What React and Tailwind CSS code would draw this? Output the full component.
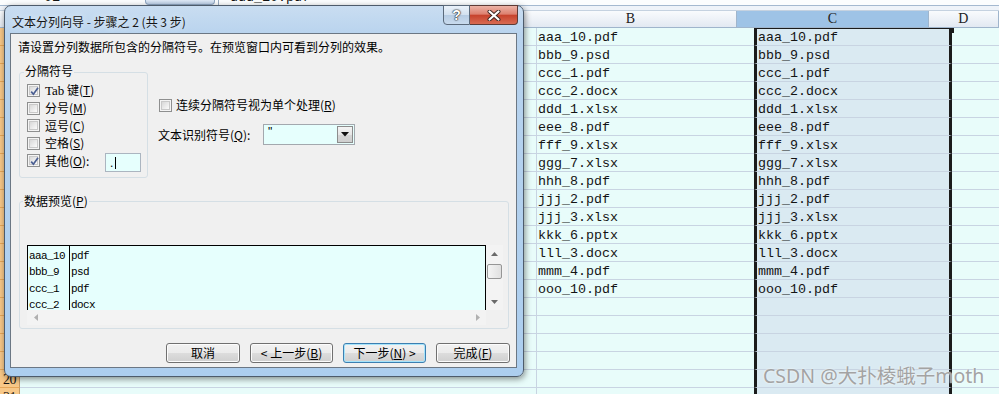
import React from "react";

const files = [
  "aaa_10.pdf", "bbb_9.psd", "ccc_1.pdf", "ccc_2.docx", "ddd_1.xlsx",
  "eee_8.pdf", "fff_9.xlsx", "ggg_7.xlsx", "hhh_8.pdf", "jjj_2.pdf",
  "jjj_3.xlsx", "kkk_6.pptx", "lll_3.docx", "mmm_4.pdf", "ooo_10.pdf",
];
const rowNums = Array.from({ length: 21 }, (_, i) => i + 1);

function M({ k }) {
  return (
    <span>
      (<span className="underline underline-offset-[1px]">{k}</span>)
    </span>
  );
}

function Check({ checked }) {
  return (
    <span className="flex-none w-[13px] h-[13px] border border-[#8e8f8f] bg-[#f4f4f4] p-px">
      <span className="relative block w-full h-full border border-[#c9c9c9] bg-gradient-to-br from-[#d8d8d8] to-[#fbfbfb]">
        {checked && (
          <svg className="absolute left-0 top-0" width="9" height="9" viewBox="0 0 9 9">
            <path d="M1.2 4.6 L3.4 7.2 L8 0.8" fill="none" stroke="#4a5e92" strokeWidth="1.7" />
          </svg>
        )}
      </span>
    </span>
  );
}

function Btn({ children, def }) {
  return (
    <div
      className={
        def
          ? "w-[83px] h-[20px] rounded-[3px] border border-[#3c7fb1] shadow-[inset_0_0_0_1px_#a6e4fb] bg-[linear-gradient(180deg,#f2f2f2_0%,#ebebeb_50%,#dddddd_50%,#cfcfcf_100%)] flex items-center justify-center leading-[16px]"
          : "w-[74px] h-[20px] rounded-[3px] border border-[#707070] shadow-[inset_0_0_0_1px_#fcfcfc] bg-[linear-gradient(180deg,#f2f2f2_0%,#ebebeb_50%,#dddddd_50%,#cfcfcf_100%)] flex items-center justify-center leading-[16px]"
      }
    >
      {children}
    </div>
  );
}

function Btn2({ children }) {
  return (
    <div className="w-[83px] h-[20px] rounded-[3px] border border-[#707070] shadow-[inset_0_0_0_1px_#fcfcfc] bg-[linear-gradient(180deg,#f2f2f2_0%,#ebebeb_50%,#dddddd_50%,#cfcfcf_100%)] flex items-center justify-center leading-[16px]">
      {children}
    </div>
  );
}

function Dialog() {
  const preview = [
    ["aaa_10", "pdf"],
    ["bbb_9", "psd"],
    ["ccc_1", "pdf"],
    ["ccc_2", "docx"],
  ];
  return (
    <div className="absolute left-[4px] top-[5px] w-[520px] h-[372px] rounded-[7px] border border-[#4d5b6b] bg-[linear-gradient(180deg,#c9ddf1_0%,#b8d3ee_8%,#acceef_100%)] shadow-[1px_2px_6px_rgba(0,0,0,0.45)] flex flex-col font-['Noto_Sans_CJK_SC','Noto_Sans',sans-serif] text-[12px] text-black">
      {/* title bar */}
      <div className="h-[27px] flex justify-between">
        <div className="pl-[7px] pt-[8px] leading-[16px] text-[12px] text-[#151515] [text-shadow:0_0_6px_#eef5fc]">
          文本分列向导 - 步骤之 2 (共 3 步)
        </div>
        <div className="flex mr-[5px] h-[20px] -mt-px">
          <div className="w-[27px] h-[20px] border border-[#5b6a7b] rounded-bl-[4px] bg-[linear-gradient(180deg,#eaf2fa_0%,#d3e1ef_48%,#b6cce3_52%,#c9dbee_100%)] flex items-center justify-center text-white font-bold text-[14px] leading-none font-['Liberation_Sans',sans-serif] [text-shadow:0_0_1px_#222,0_0_1px_#222,0_0_2px_#333]">
            ?
          </div>
          <div className="w-[48px] h-[20px] border border-l-0 border-[#5d3b36] rounded-br-[4px] bg-[linear-gradient(180deg,#ecb3a6_0%,#dd806f_45%,#c7432d_52%,#d86a52_100%)] flex items-center justify-center">
            <svg width="14" height="11" viewBox="0 0 14 11">
              <path d="M2.5 1.5 L11.5 9.5 M11.5 1.5 L2.5 9.5" stroke="#3a2420" strokeWidth="4" strokeLinecap="round" />
              <path d="M2.5 1.5 L11.5 9.5 M11.5 1.5 L2.5 9.5" stroke="#ffffff" strokeWidth="2.2" strokeLinecap="round" />
            </svg>
          </div>
        </div>
      </div>

      {/* client area */}
      <div className="flex-1 ml-[5px] mr-[6px] mb-[8px] border border-[#6b7784] bg-[#f0f0f0] pl-[8px] pr-[6px] flex flex-col">
        <div className="-ml-px mt-[5px] leading-[16px]">
          请设置分列数据所包含的分隔符号。在预览窗口内可看到分列的效果。
        </div>

        <div className="flex mt-[17px]">
          <div className="relative w-[129px] h-[106px] rounded-[3px] border border-[#d5dfe5] pl-[7px] pt-[9px] flex flex-col">
            <span className="absolute -top-[10px] left-[4px] bg-[#f0f0f0] px-px leading-[16px]">分隔符号</span>
            <div className="h-[17.5px] flex items-center gap-[5px]">
              <Check checked />
              <span className="leading-[16px]">
                <span className="font-['Liberation_Serif',serif] text-[13px]">Tab</span> 键<M k="T" />
              </span>
            </div>
            <div className="h-[17.5px] flex items-center gap-[5px]">
              <Check />
              <span className="leading-[16px]">分号<M k="M" /></span>
            </div>
            <div className="h-[17.5px] flex items-center gap-[5px]">
              <Check />
              <span className="leading-[16px]">逗号<M k="C" /></span>
            </div>
            <div className="h-[17.5px] flex items-center gap-[5px]">
              <Check />
              <span className="leading-[16px]">空格<M k="S" /></span>
            </div>
            <div className="h-[17.5px] flex items-center gap-[5px]">
              <Check checked />
              <span className="w-[55px] leading-[16px]">其他<M k="O" />:</span>
              <div className="mt-[4px] w-[36px] h-[19px] border border-[#abb5c0] bg-[#e6fffd] flex items-center pl-[4px] leading-[14px] font-['Liberation_Sans',sans-serif] text-[12px]">
                .<span className="ml-[2px] w-px h-[12px] bg-black"></span>
              </div>
            </div>
          </div>

          <div className="ml-[10px] flex flex-col">
            <div className="mt-[25px] h-[16px] flex items-center pl-px gap-[4px]">
              <Check />
              <span className="leading-[16px]">连续分隔符号视为单个处理<M k="R" /></span>
            </div>
            <div className="mt-[11px] flex items-center">
              <span className="w-[105px] leading-[16px]">文本识别符号<M k="Q" />:</span>
              <div className="w-[92px] h-[21px] border border-[#a3a8ae] bg-[#e6fffd] flex">
                <span className="flex-1 pl-[4px] leading-[14px] font-['Liberation_Sans',sans-serif] text-[12px]">"</span>
                <div className="m-px w-[16px] border border-[#8c8c8c] bg-[linear-gradient(180deg,#f4f4f4,#e6e6e6_50%,#d6d6d6_50%,#cfcfcf)] flex items-center justify-center">
                  <svg width="8" height="5" viewBox="0 0 8 5">
                    <path d="M0 0 L8 0 L4 4.5 Z" fill="#111" />
                  </svg>
                </div>
              </div>
            </div>
          </div>
        </div>

        {/* preview */}
        <div className="relative mt-[23px] w-[490px] h-[128px] rounded-[3px] border border-[#d5dfe5] pl-[7px] pt-[43px]">
          <span className="absolute -top-[9px] left-[3px] bg-[#f0f0f0] px-px leading-[16px]">数据预览<M k="P" /></span>
          <div className="flex flex-col w-[476px] h-[80px]">
            <div className="flex h-[65px]">
              <div className="w-[459px] border-t border-l border-r border-black bg-[#e6fffd] flex font-['Liberation_Mono',monospace] text-[11px] tracking-[-0.6px] leading-[16.4px] overflow-hidden">
                <div className="w-[42px] border-r border-black pl-px pt-[2px]">
                  {preview.map((p) => (
                    <div key={p[0]}>{p[0]}</div>
                  ))}
                </div>
                <div className="flex-1 pl-px pt-[2px]">
                  {preview.map((p) => (
                    <div key={p[0]}>{p[1]}</div>
                  ))}
                </div>
              </div>
              <div className="w-[17px] bg-[#f3f3f3] flex flex-col">
                <div className="h-[17px] flex items-center justify-center">
                  <svg width="7" height="4" viewBox="0 0 7 4"><path d="M0 4 L7 4 L3.5 0 Z" fill="#6a6a6a" /></svg>
                </div>
                <div className="flex-1 flex flex-col items-center pt-[2px]">
                  <div className="w-[15px] h-[15px] rounded-[2px] border border-[#969696] bg-[linear-gradient(90deg,#f4f4f4,#e0e0e0)]"></div>
                </div>
                <div className="h-[17px] flex items-center justify-center">
                  <svg width="7" height="4" viewBox="0 0 7 4"><path d="M0 0 L7 0 L3.5 4 Z" fill="#6a6a6a" /></svg>
                </div>
              </div>
            </div>
            <div className="flex h-[15px]">
              <div className="w-[459px] bg-[#f3f3f3] flex justify-between items-center">
                <div className="w-[17px] flex items-center justify-center">
                  <svg width="4" height="7" viewBox="0 0 4 7"><path d="M4 0 L4 7 L0 3.5 Z" fill="#b0b0b0" /></svg>
                </div>
                <div className="w-[17px] flex items-center justify-center">
                  <svg width="4" height="7" viewBox="0 0 4 7"><path d="M0 0 L0 7 L4 3.5 Z" fill="#b0b0b0" /></svg>
                </div>
              </div>
              <div className="flex-1 bg-[#f0f0f0]"></div>
            </div>
          </div>
        </div>

        {/* buttons */}
        <div className="mt-[14px] flex justify-end gap-[10px]">
          <Btn>取消</Btn>
          <Btn2>&lt; 上一步<M k="B" /></Btn2>
          <Btn def>
            <span className="w-[83px] text-center">下一步<M k="N" /> &gt;</span>
          </Btn>
          <Btn>完成<M k="F" /></Btn>
        </div>
      </div>
    </div>
  );
}

function Sheet() {
  return (
    <div className="w-[999px] h-[394px] overflow-hidden bg-[#e8fcfa] font-['Liberation_Mono',monospace] text-[13.33px] text-[#141414]">
      {/* top strip */}
      <div className="flex h-[5px] bg-[#fbfdfe] overflow-hidden">
        <div className="w-[145px] flex items-end pl-[44px]">
          <span className="leading-[14px]">01</span>
        </div>
        <div className="w-[70px] h-[5px] rounded-b-[4px] bg-gradient-to-b from-[#dfe9f5] to-[#bccfe6] border border-t-0 border-[#8ea5c0]"></div>
        <div className="w-[3px]"></div>
        <div className="w-px bg-[#9aabbf]"></div>
        <div className="flex items-end pl-[11px]">
          <span className="leading-[14px]">ddd_10.pdf</span>
        </div>
      </div>
      <div className="h-px bg-[#a4b9d0]"></div>
      <div className="h-[4px] bg-[#eef3f9]"></div>

      {/* column headers */}
      <div className="flex h-[18px] border-t border-b border-t-[#c5d2e0] border-b-[#9fb5cc] bg-gradient-to-b from-[#f9fbfd] to-[#e2e9f2] font-['Liberation_Serif',serif] text-[14px] text-[#222]">
        <div className="w-[20px] border-r border-[#9fb5cc]"></div>
        <div className="w-[517px] border-r border-[#9fb5cc]"></div>
        <div className="w-[218px] border-r border-[#9fb5cc] flex items-center justify-center leading-[16px]">B</div>
        <div className="w-[196px] border-r border-[#9fb5cc] bg-[#9ec3e6] flex items-center justify-center leading-[16px]">C</div>
        <div className="w-[72px] border-r border-[#9fb5cc] flex items-center justify-center leading-[16px]">D</div>
        <div className="flex-1"></div>
      </div>

      {/* rows */}
      {rowNums.map((n) => (
        <div key={n} className="flex h-[18px]">
          <div className="w-[20px] border-r border-b border-r-[#c39a66] border-b-[#e6a659] bg-[#f8c888] flex items-center justify-center pt-[2px] font-['Liberation_Serif',serif] text-[14px] leading-[16px] tracking-[-0.5px]">
            {n}
          </div>
          <div className="w-[517px] border-r border-b border-[#c8d4e2]"></div>
          <div className="w-[217px] border-b border-[#c8d4e2] pl-px pt-[3px] flex items-center leading-[16px]">
            {files[n - 1] || ""}
          </div>
          <div
            className={
              n === 1
                ? "relative w-[198px] border-l-[3px] border-r-[3px] border-b border-l-[#1b1b1b] border-r-[#1b1b1b] border-b-[#c8d4e2] bg-[#daeaf2] shadow-[inset_0_1px_0_#1b1b1b] pl-px pt-[3px] flex items-center leading-[16px]"
                : "w-[198px] border-l-[3px] border-r-[3px] border-b border-l-[#1b1b1b] border-r-[#1b1b1b] border-b-[#c8d4e2] bg-[#daeaf2] pl-px pt-[3px] flex items-center leading-[16px]"
            }
          >
            {files[n - 1] || ""}
            {n === 1 && <span className="absolute -right-[5px] top-0 w-[5px] h-[5px] bg-[#1b1b1b]"></span>}
          </div>
          <div className="flex-1 border-b border-[#c8d4e2]"></div>
        </div>
      ))}
    </div>
  );
}

export default function App() {
  return (
    <div className="relative w-[999px] h-[394px] overflow-hidden">
      <Sheet />
      <Dialog />
      <div className="absolute left-[763px] top-[364px] text-[19.5px] leading-[24px] text-[#a3a3a3] font-['Noto_Sans','Noto_Sans_CJK_SC',sans-serif] [text-shadow:0_0_2px_#ffffff]">
        CSDN @大扑棱蛾子moth
      </div>
    </div>
  );
}
